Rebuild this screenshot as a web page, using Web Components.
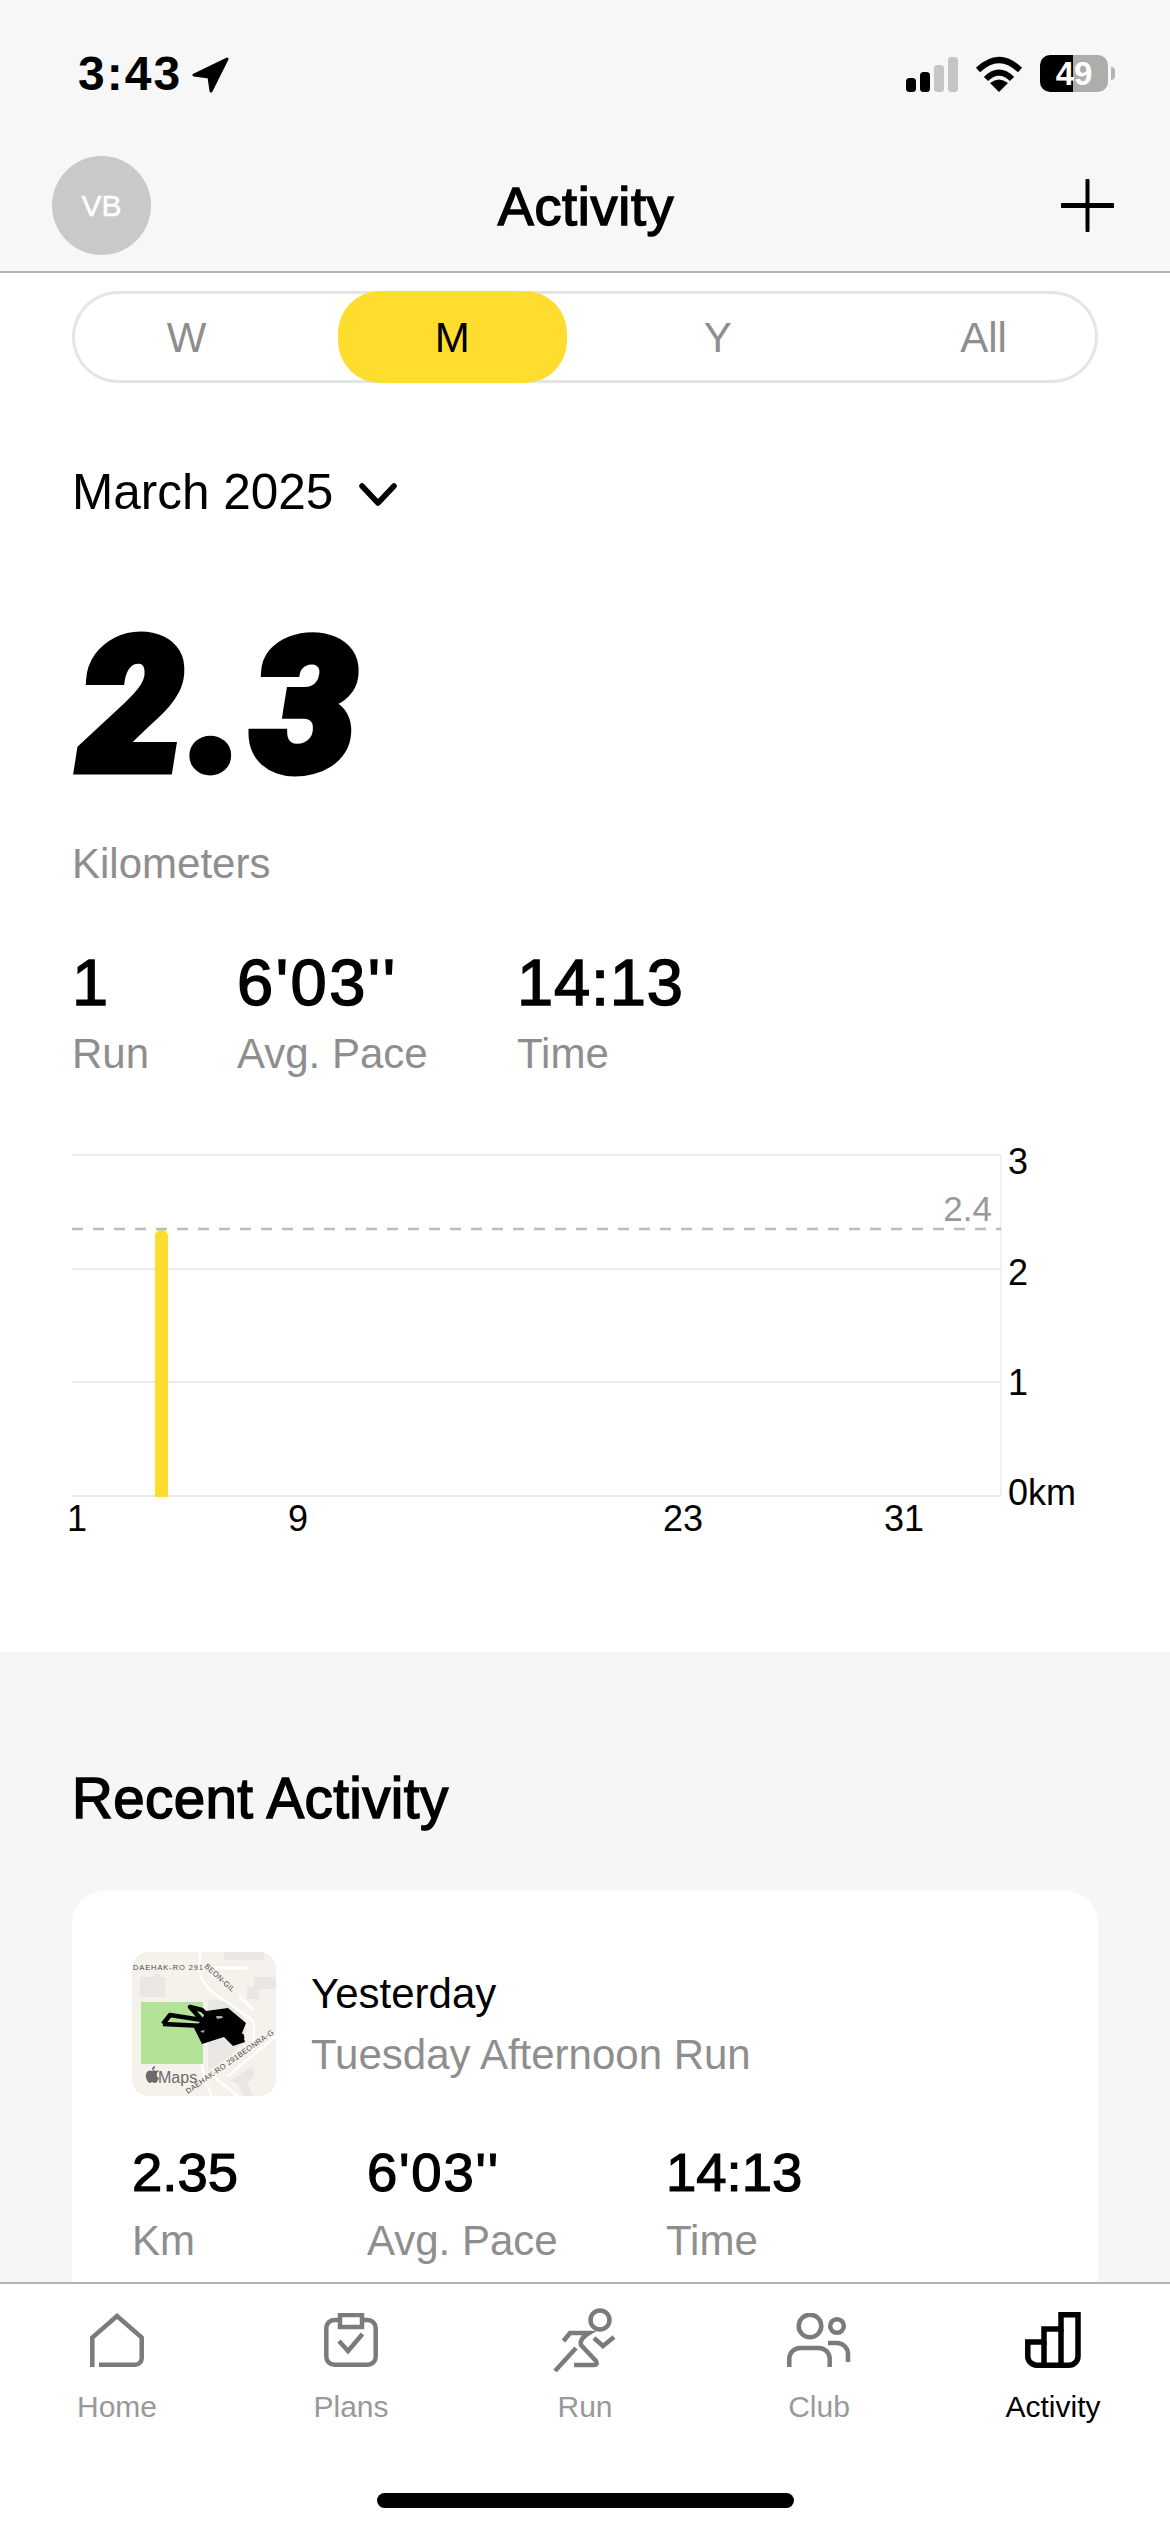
<!DOCTYPE html>
<html>
<head>
<meta charset="utf-8">
<title>Activity</title>
<style>
    html, body { margin: 0; padding: 0; background: #f6f6f6; }
    body { width: 1170px; height: 2532px; overflow: hidden; font-family: "Liberation Sans", Arial, sans-serif; color: #000; }
    app-shell { height: 2532px; }
</style>
</head>
<body>
<app-shell>
    <app-header slot="header"></app-header>
    <period-tabs></period-tabs>
    <month-summary month="March 2025" distance="2.3" unit="Kilometers"></month-summary>
    <stat-row size="big" style="--c1:165px;--c2:280px;--x:72px;">
        <stat-item value="1" label="Run"></stat-item>
        <stat-item value="6'03''" label="Avg. Pace" style="--v-ls:2.500px"></stat-item>
        <stat-item value="14:13" label="Time" style="--v-ls:.800px"></stat-item>
    </stat-row>
    <month-chart></month-chart>
    <recent-activity slot="gray"></recent-activity>
    <tab-bar slot="footer">
        <tab-item label="Home" icon="home"></tab-item>
        <tab-item label="Plans" icon="plans"></tab-item>
        <tab-item label="Run" icon="run"></tab-item>
        <tab-item label="Club" icon="club"></tab-item>
        <tab-item label="Activity" icon="activity" active></tab-item>
    </tab-bar>
</app-shell>

<script>
/**
 * Base: sets up the open shadow root from a template string
 */
class ShadowBase extends HTMLElement {
    constructor() {
        super();
        const shadowRoot = this.attachShadow({ mode: 'open' });
        const template = document.createElement('template');
        template.innerHTML = this.template();
        shadowRoot.appendChild(document.importNode(template.content, true));
    }
    attr(name, fallback = '') {
        return this.hasAttribute(name) ? this.getAttribute(name) : fallback;
    }
}

class AppShell extends ShadowBase {
    template() {
        return `
            <style>
                :host { display: flex; flex-direction: column; }
                main { flex: 1; min-height: 0; overflow: hidden; }
                .white { background: #fff; height: 1379px; overflow: hidden; }
            </style>
            <slot name="header"></slot>
            <main>
                <div class="white"><slot></slot></div>
                <slot name="gray"></slot>
            </main>
            <slot name="footer"></slot>
        `;
    }
}

class AppHeader extends ShadowBase {
    template() {
        return `
            <style>
                :host { display: block; background: #f7f7f7; border-bottom: 2px solid #b4b4b4; height: 271px; box-sizing: content-box; }
                .status { height: 140px; box-sizing: border-box; padding: 54px 62px 0 78px; display: flex; align-items: flex-start; }
                .time { font: 700 48px/40px "Liberation Sans", Arial, sans-serif; letter-spacing: 2px; }
                .arrow { margin: 3px 0 0 10px; }
                .right { margin-left: auto; display: flex; align-items: flex-start; }
                .wifi { margin-left: 17px; margin-top: 1px; }
                .batt { margin-left: 17px; margin-top: 1px; width: 68px; height: 37px; border-radius: 10px; background: linear-gradient(90deg, #000 0, #000 48.5%, #adadad 48.5%); color: #fff; font: 700 33px/37px "Liberation Sans", Arial, sans-serif; text-align: center; position: relative; }
                .batt::after { content: ""; position: absolute; left: 71px; top: 12px; width: 4px; height: 13px; background: #b5b5b5; border-radius: 0 4px 4px 0; }
                .signal { margin-top: 3px; }
                .nav { height: 131px; padding: 0 56px 0 52px; display: flex; align-items: center; justify-content: space-between; position: relative; }
                .avatar { width: 99px; height: 99px; border-radius: 50%; background: #c9c9c9; color: #fff; font: 400 30px/99px "Liberation Sans", Arial, sans-serif; -webkit-text-stroke: .5px #fff; text-align: center; }
                h1 { margin: 0; font: 400 54px/60px "Liberation Sans", Arial, sans-serif; letter-spacing: .7px; -webkit-text-stroke: 1.500px #000; position: absolute; left: 2px; right: 0; text-align: center; }
                svg { display: block; }
            </style>
            <div class="status">
                <span class="time">3:43</span>
                <svg class="arrow" width="37" height="36" viewBox="0 0 37 36"><path d="M35 2 2 18l15 2 2 14Z" fill="#000" stroke="#000" stroke-width="3" stroke-linejoin="round"/></svg>
                <div class="right">
                    <svg class="signal" width="52" height="36" viewBox="0 0 52 36">
                        <rect x="0" y="21" width="10" height="14" rx="3.500" fill="#000"/>
                        <rect x="14" y="15" width="10" height="20" rx="3.500" fill="#000"/>
                        <rect x="28" y="8" width="10" height="27" rx="3.500" fill="#c5c5c5"/>
                        <rect x="42" y="0" width="10" height="35" rx="3.500" fill="#c5c5c5"/>
                    </svg>
                    <svg class="wifi" width="48" height="37" viewBox="0 0 48 37" fill="none" stroke="#000" stroke-width="6">
                        <path d="M3 15Q24-5 45 15"/>
                        <path d="M11 24Q24 11 37 24"/>
                        <path d="M24 37 15 28Q24 21 33 28Z" fill="#000" stroke="none"/>
                    </svg>
                    <div class="batt">49</div>
                </div>
            </div>
            <div class="nav">
                <div class="avatar">VB</div>
                <h1>Activity</h1>
                <svg width="53" height="53" viewBox="0 0 53 53" stroke="#000" stroke-linecap="round"><path d="M1.500 26.500H51.500" stroke-width="5"/><path d="M26.500 1.500V51.500" stroke-width="4"/></svg>
            </div>
        `;
    }
}

class PeriodTabs extends ShadowBase {
    template() {
        return `
            <style>
                :host { display: flex; justify-content: space-between; margin: 18px 72px 0; height: 92px; border-radius: 46px; box-shadow: inset 0 0 0 3px #e5e5e5; font: 400 42px/94px "Liberation Sans", Arial, sans-serif; color: #8e8e8e; }
                div { width: 229px; text-align: center; border-radius: 42px; }
                .on { background: #ffdd2e; color: #000; }
            </style>
            <div>W</div><div class="on">M</div><div>Y</div><div>All</div>
        `;
    }
}

class MonthSummary extends ShadowBase {
    template() {
        return `
            <style>
                :host { display: block; padding: 81px 72px 0; }
                .month { display: flex; align-items: center; gap: 26px; font: 400 49.500px/56px "Liberation Sans", Arial, sans-serif; }
                .big { margin-top: 86px; font: italic 900 186px/200px Roboto, "Liberation Sans", sans-serif; letter-spacing: 7px; -webkit-text-stroke: 9px #000; margin-left: 7px; }
                .unit { margin-top: 33px; font: 400 42px/50px "Liberation Sans", Arial, sans-serif; color: #8e8e8e; }
                svg { display: block; margin-top: 3px; }
            </style>
            <div class="month">
                <span>${this.attr('month')}</span>
                <svg width="38" height="24" viewBox="0 0 38 24" fill="none" stroke="#000" stroke-width="5.500" stroke-linecap="round" stroke-linejoin="round"><path d="M3 4 19 21 35 4"/></svg>
            </div>
            <div class="big">${this.attr('distance')}</div>
            <div class="unit">${this.attr('unit')}</div>
        `;
    }
}

class StatRow extends ShadowBase {
    template() {
        return `
            <style>
                :host { display: grid; grid-template-columns: var(--c1) var(--c2) auto; padding-left: var(--x); margin-top: var(--top, 59px); }
            </style>
            <slot></slot>
        `;
    }
}

class StatItem extends ShadowBase {
    template() {
        return `
            <style>
                :host { display: block; }
                .v { font: 400 var(--v-size, 65px)/var(--v-line, 70px) "Liberation Sans", Arial, sans-serif; font-kerning: none; letter-spacing: var(--v-ls, 0); -webkit-text-stroke: var(--v-stroke, 1.500px) #000; white-space: nowrap; }
                .l { margin-top: var(--l-gap, 11px); font: 400 42px/50px "Liberation Sans", Arial, sans-serif; color: #8e8e8e; white-space: nowrap; }
            </style>
            <div class="v">${this.attr('value')}</div>
            <div class="l">${this.attr('label')}</div>
        `;
    }
}

class MonthChart extends ShadowBase {
    template() {
        return `
            <style>
                :host { display: block; margin-top: 41px; }
                svg { display: block; }
                text { font: 400 36px "Liberation Sans", Arial, sans-serif; fill: #000; }
                line.g { stroke: #ebebeb; stroke-width: 2; }
            </style>
            <svg width="1170" height="430" viewBox="0 0 1170 430">
                <line class="g" x1="72" x2="1001" y1="35" y2="35"/>
                <line class="g" x1="72" x2="1001" y1="149" y2="149"/>
                <line class="g" x1="72" x2="1001" y1="262" y2="262"/>
                <line class="g" x1="72" x2="1001" y1="376" y2="376"/>
                <line x1="1001" x2="1001" y1="35" y2="376" stroke="#ededed" stroke-width="1.500"/>
                <path d="M155 377V116a6.500 6.500 0 0 1 13 0V377Z" fill="#ffdd2e"/>
                <line x1="72" x2="1001" y1="109" y2="109" stroke="#bcbcbc" stroke-width="2.500" stroke-dasharray="11 10"/>
                <text x="992" y="101" text-anchor="end" style="fill:#999;font-size:35px">2.4</text>
                <text x="1008" y="54">3</text>
                <text x="1008" y="165">2</text>
                <text x="1008" y="275">1</text>
                <text x="1008" y="385">0km</text>
                <text x="77" y="411" text-anchor="middle">1</text>
                <text x="298" y="411" text-anchor="middle">9</text>
                <text x="683" y="411" text-anchor="middle">23</text>
                <text x="904" y="411" text-anchor="middle">31</text>
            </svg>
        `;
    }
}

class RecentActivity extends ShadowBase {
    template() {
        return `
            <style>
                :host { display: block; padding: 115px 72px 0; }
                h2 { margin: 0; font: 400 56.500px/64px "Liberation Sans", Arial, sans-serif; letter-spacing: .4px; -webkit-text-stroke: 1.500px #000; }
                .card { margin-top: 60px; background: #fff; border-radius: 32px; padding: 61px 60px 80px; }
                .top { display: flex; align-items: center; gap: 35px; }
                .title { font: 400 42px/50px "Liberation Sans", Arial, sans-serif; }
                .sub { margin-top: 11px; font: 400 42px/50px "Liberation Sans", Arial, sans-serif; color: #8e8e8e; }
                stat-row { --c1: 235px; --c2: 299px; --x: 0px; --top: 47px; --v-size: 54.500px; --v-line: 60px; --v-stroke: 1.200px; --l-gap: 13px; }
            </style>
            <h2>Recent Activity</h2>
            <div class="card">
                <div class="top">
                    <route-map></route-map>
                    <div>
                        <div class="title">Yesterday</div>
                        <div class="sub">Tuesday Afternoon Run</div>
                    </div>
                </div>
                <stat-row>
                    <stat-item value="2.35" label="Km"></stat-item>
                    <stat-item value="6'03''" label="Avg. Pace" style="--v-ls:1.800px"></stat-item>
                    <stat-item value="14:13" label="Time"></stat-item>
                </stat-row>
            </div>
        `;
    }
}

class RouteMap extends ShadowBase {
    template() {
        return `
            <style>
                :host { display: block; width: 144px; height: 144px; border-radius: 16px; overflow: hidden; flex: none; }
                svg { display: block; }
                text { font-family: "Liberation Sans", Arial, sans-serif; }
            </style>
            <svg width="144" height="144" viewBox="0 0 144 144">
                <rect width="144" height="144" fill="#f4f2ea"/>
                <g fill="#e8e7e4">
                    <path d="M8 25h14v-3h6v3h5v20h-25Z"/>
                    <rect x="92" y="0" width="40" height="8"/>
                    <rect x="122" y="25" width="22" height="12"/>
                    <rect x="115" y="35" width="12" height="12"/>
                    <path d="M76 48q22-2 32 12 10 16 2 32-14 16-34 26Z"/>
                    <path d="M98 128l22-13 3 8-8 8 6 13h-10l-5-12Z"/>
                </g>
                <g fill="none" stroke="#fff" stroke-width="2.500">
                    <path d="M68 0V20Q70 36 95 50L120 68Q124 72 120 100"/>
                    <path d="M74 16H118"/>
                    <path d="M107 44 122 58"/>
                    <path d="M70 112Q72 130 80 144"/>
                    <path d="M78 122 106 144"/>
                    <path d="M96 124 144 84"/>
                </g>
                <rect x="9" y="50" width="62" height="62" fill="#b2e296"/>
                <g fill="#4a4a4a" font-size="7.500" letter-spacing=".3">
                    <text x="1" y="18" letter-spacing=".9">DAEHAK-RO 291</text>
                    <text x="72" y="15" transform="rotate(42 72 15)">BEON-GIL</text>
                    <text x="56" y="142" transform="rotate(-35 56 142)">DAEHAK-RO 291BEONRA-G</text>
                </g>
                <g fill="none" stroke="#000" stroke-width="4.500" stroke-linejoin="round">
                    <path d="M31 72 38 63 70 68 58 55 70 58 78 66"/>
                    <path d="M31 72 72 74"/>
                    <path d="M98 88 112 84"/>
                </g>
                <path d="M74 59 96 56 114 71 110 81 113 90 101 94 92 85 70 92 62 76 69 69Z" fill="#000"/>
                <path d="M84 64h6l1 2-6 1Z M68 79l5-1-2 3Z" fill="#aaa"/>
                <path d="M24 119c-1-1-3-1-4 0-1-1-5-1-6 3-1 4 2 9 4 9 1 0 1-1 2-1s1 1 3 1c2 0 3-3 4-5-3-1-3-6 0-7-1-1-2-1-3 0Zm-4-1c0-2 1-4 3-4 0 2-1 4-3 4Z" fill="#6b6b6b"/>
                <text x="26" y="131" font-size="16" fill="#6b6b6b">Maps</text>
            </svg>
        `;
    }
}

class TabBar extends ShadowBase {
    template() {
        return `
            <style>
                :host { display: block; background: #fff; border-top: 2px solid #b4b4b4; height: 250px; box-sizing: border-box; padding-top: 24px; position: relative; }
                .items { display: grid; grid-template-columns: repeat(5, 1fr); }
                .home { width: 417px; height: 15px; border-radius: 8px; background: #000; margin: 68px auto 0; }
            </style>
            <div class="items"><slot></slot></div>
            <div class="home"></div>
        `;
    }
}

const TAB_ICONS = {
    home: '<svg width="54" height="54" viewBox="0 0 54 54"><path d="M2.300 54V24.500L27 3 51.700 24.500V45a6.500 6.500 0 0 1-6.500 6.700H9"/></svg>',
    plans: '<svg width="54" height="54" viewBox="0 0 54 54"><rect x="2.300" y="7" width="49.400" height="44.700" rx="8"/><rect x="16" y="2" width="22" height="12" fill="#fff"/><path d="M15 22 24 32 38.500 15" transform="translate(0 6)"/></svg>',
    run: '<svg width="64" height="64" viewBox="0 0 64 64"><circle cx="47" cy="12" r="9.500"/><path d="M41 30 50 38 61 29"/><path d="M10.500 33 17 25H36Q26 31 28 37L43 53Q45 57 41 57H21"/><path d="M23 40 2 63"/></svg>',
    club: '<svg width="64" height="54" viewBox="0 0 64 54"><circle cx="23" cy="13" r="11.300"/><circle cx="50" cy="13" r="6.800"/><path d="M2.300 54V45A11 11 0 0 1 13 35H32A11 11 0 0 1 42.700 45V54"/><path d="M41 30H50A11 11 0 0 1 61 41V49"/></svg>',
    activity: '<svg width="56" height="56" viewBox="0 0 56 56"><path d="M2.800 30H19V17H36V2.800H53V44A9 9 0 0 1 44 53.200H12A9 9 0 0 1 2.800 44Z"/><path d="M19 30V53M36 17V53"/></svg>'
};

class TabItem extends ShadowBase {
    template() {
        return `
            <style>
                :host { display: flex; flex-direction: column; align-items: center; color: #999; --stroke: #7b7b7b; --icon-w: 4.500px; }
                :host([active]) { color: #000; --stroke: #000; --icon-w: 5.500px; }
                .icon { height: 64px; display: flex; align-items: center; justify-content: center; }
                .icon svg { display: block; fill: none; stroke: var(--stroke); stroke-width: var(--icon-w); }
                .label { margin-top: 17px; font: 400 30px/36px "Liberation Sans", Arial, sans-serif; }
            </style>
            <div class="icon">${TAB_ICONS[this.attr('icon')]}</div>
            <div class="label">${this.attr('label')}</div>
        `;
    }
}

customElements.define('app-shell', AppShell);
customElements.define('app-header', AppHeader);
customElements.define('period-tabs', PeriodTabs);
customElements.define('month-summary', MonthSummary);
customElements.define('stat-row', StatRow);
customElements.define('stat-item', StatItem);
customElements.define('month-chart', MonthChart);
customElements.define('recent-activity', RecentActivity);
customElements.define('route-map', RouteMap);
customElements.define('tab-bar', TabBar);
customElements.define('tab-item', TabItem);
</script>
</body>
</html>
